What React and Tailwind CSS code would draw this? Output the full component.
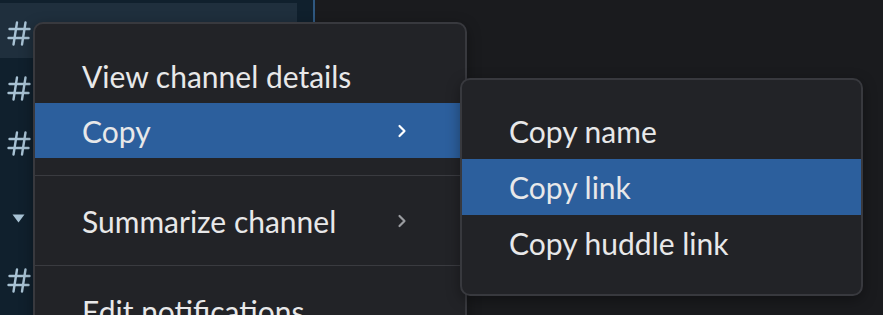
import { ChevronRight } from 'lucide-react';

const font = { fontFamily: 'Lato, "Noto Sans", sans-serif' };

function Hash() {
  return (
    <svg width="24" height="25" viewBox="0 0 24 25" fill="none" stroke="#a8c2d4" strokeWidth="2.4" strokeLinecap="round">
      <path d="M10 1.5 L6.5 23.5" />
      <path d="M18.5 1.5 L15 23.5" />
      <path d="M2.5 8 H22.5" />
      <path d="M1.5 17 H21.5" />
    </svg>
  );
}

function Chevron({ dim }) {
  return (
    <ChevronRight
      size={20}
      strokeWidth={2.6}
      className={dim ? 'text-[#9a9ca0]' : 'text-white'}
    />
  );
}

function MenuItem({ label, active, arrow, dimArrow }) {
  return (
    <div
      className={`flex h-[55px] items-center justify-between pl-[47px] pr-[53px] text-[30px] text-[#e8e8e9] ${
        active ? 'bg-[#2c5f9d]' : ''
      }`}
    >
      <span className="leading-none">{label}</span>
      {arrow && <Chevron dim={dimArrow} />}
    </div>
  );
}

function Divider() {
  return <div className="my-[17px] h-px bg-[#3a3b40]" />;
}

export default function App() {
  return (
    <div className="relative flex h-[315px] w-[883px] overflow-hidden bg-[#1a1b1e]" style={font}>
      {/* Sidebar */}
      <div className="flex h-full w-[315px] flex-col border-r-2 border-[#2f5880] bg-[#10202d] pt-[3px]">
        <div className="flex h-[55px] w-[297px] items-center bg-[#1f2f3d] pl-[7px] pt-[5px]">
          <Hash />
        </div>
        <div className="flex h-[55px] items-center pl-[7px] pt-[5px]">
          <Hash />
        </div>
        <div className="flex h-[55px] items-center pl-[7px] pt-[5px]">
          <Hash />
        </div>
        <div className="flex h-[56px] items-center pl-[12px] pt-[44px]">
          <svg width="13" height="9" viewBox="0 0 13 9">
            <path d="M0.5 0.5 H12.5 L6.5 8.5 Z" fill="#a8c2d4" />
          </svg>
        </div>
        <div className="flex h-[56px] items-center pl-[7px] pt-[56px]">
          <Hash />
        </div>
      </div>

      {/* Main context menu */}
      <div className="absolute left-[33px] top-[22px] h-[320px] w-[434px] rounded-[10px] border-2 border-[#38393e] bg-[#222327] pt-[24px] shadow-[0_4px_14px_rgba(0,0,0,0.35)]">
        <MenuItem label="View channel details" />
        <MenuItem label="Copy" active arrow />
        <Divider />
        <MenuItem label="Summarize channel" arrow dimArrow />
        <Divider />
        <MenuItem label="Edit notifications" />
      </div>

      {/* Copy submenu */}
      <div className="absolute left-[460px] top-[78px] w-[403px] overflow-hidden rounded-[10px] border-2 border-[#38393e] bg-[#222327] py-[23px] shadow-[0_4px_14px_rgba(0,0,0,0.35)]">
        <div className="flex h-[56px] items-center pl-[47px] text-[30px] text-[#e8e8e9]">
          <span className="leading-none">Copy name</span>
        </div>
        <div className="flex h-[56px] items-center bg-[#2c5f9d] pl-[47px] text-[30px] text-[#e8e8e9]">
          <span className="leading-none">Copy link</span>
        </div>
        <div className="flex h-[56px] items-center pl-[47px] text-[30px] text-[#e8e8e9]">
          <span className="leading-none">Copy huddle link</span>
        </div>
      </div>
    </div>
  );
}
